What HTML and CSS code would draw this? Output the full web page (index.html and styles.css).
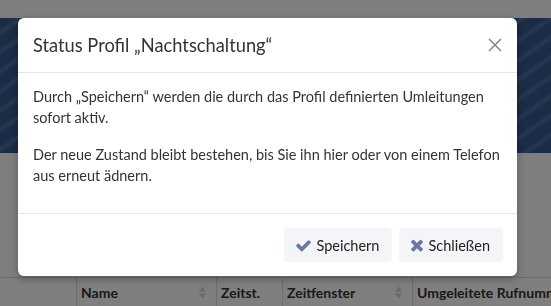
FILE: index.html
```html
<!DOCTYPE html>
<html lang="de">
<head>
    <meta charset="UTF-8">
    <meta name="viewport" content="width=device-width, initial-scale=1.0">
    <title>Status Profil</title>
    <link rel="stylesheet" href="styles.css">
</head>
<body>
    <div class="page">
        <div class="topbar"></div>
        <div class="banner"></div>
        <div class="content">
            <div class="grid-head">
                <div class="cell"></div>
                <div class="cell">Name
                    <svg class="sort" viewBox="0 0 8 16"><path d="M4 1 L8 7 H0 Z M4 15 L8 9 H0 Z"/></svg>
                </div>
                <div class="cell">Zeitst.</div>
                <div class="cell">Zeitfenster
                    <svg class="sort" viewBox="0 0 8 16"><path d="M4 1 L8 7 H0 Z M4 15 L8 9 H0 Z"/></svg>
                </div>
                <div class="cell">Umgeleitete Rufnummer</div>
            </div>
        </div>
    </div>

    <div class="backdrop"></div>

    <div class="modal">
        <div class="modal-header">
            <h4 class="modal-title">Status Profil „Nachtschaltung“</h4>
            <button type="button" class="close" aria-label="Schließen">
                <svg viewBox="0 0 14 14"><path d="M1 1 L13 13 M13 1 L1 13"/></svg>
            </button>
        </div>
        <div class="modal-body">
            <p>Durch „Speichern“ werden die durch das Profil definierten Umleitungen sofort aktiv.</p>
            <p>Der neue Zustand bleibt bestehen, bis Sie ihn hier oder von einem Telefon aus erneut ädnern.</p>
        </div>
        <div class="modal-footer">
            <button type="button" class="btn">
                <svg class="icon-check" viewBox="0 0 1792 1792"><path d="M1671 566q0 40-28 68l-724 724-136 136q-28 28-68 28t-68-28l-136-136-362-362q-28-28-28-68t28-68l136-136q28-28 68-28t68 28l294 295 656-657q28-28 68-28t68 28l136 136q28 28 28 68z"/></svg>
                Speichern
            </button>
            <button type="button" class="btn">
                <svg class="icon-times" viewBox="0 0 1408 1792"><path d="M1298 1322q0 40-28 68l-136 136q-28 28-68 28t-68-28l-294-294-294 294q-28 28-68 28t-68-28l-136-136q-28-28-28-68t28-68l294-294-294-294q-28-28-28-68t28-68l136-136q28-28 68-28t68 28l294 294 294-294q28-28 68-28t68 28l136 136q28 28 28 68t-28 68l-294 294 294 294q28 28 28 68z"/></svg>
                Schließen
            </button>
        </div>
    </div>
</body>
</html>
```
FILE: styles.css
```css
body {
    font-family: Lato, "Liberation Sans", sans-serif;
    font-size: 14.5px;
    color: #333;
    background-color: #fff;
    margin: 0;
    padding: 0;
    overflow: hidden;
}
.page {
    height: 306px;
}
.topbar {
    height: 18px;
    background-color: #fff;
}
.banner {
    height: 135px;
    background-color: #39588c;
    background-image: repeating-linear-gradient(145deg, rgba(150, 175, 215, 0) 0, rgba(150, 175, 215, 0) 8px, rgba(150, 175, 215, 0.28) 12px, rgba(150, 175, 215, 0) 16px);
}
.content {
    padding-top: 124px;
}
.grid-head {
    display: grid;
    grid-template-columns: 76px 140px 66px 130px 1fr;
    border-top: 1px solid #ddd;
    height: 36px;
}
.grid-head .cell {
    display: flex;
    align-items: center;
    padding: 0 4px 8px;
    border-left: 1px solid #ddd;
    font-weight: bold;
    font-size: 14px;
    color: #333;
    white-space: nowrap;
    overflow: hidden;
}
.grid-head .cell:first-child {
    border-left: none;
}
.sort {
    width: 7px;
    height: 15px;
    fill: #d4d4d4;
    margin-left: auto;
    margin-right: 6px;
}
.backdrop {
    position: fixed;
    inset: 0;
    background-color: rgba(0, 0, 0, 0.5);
}
.modal {
    position: absolute;
    left: 18px;
    top: 18px;
    width: 499px;
    background-color: #fff;
    border-radius: 6px;
    box-shadow: 0 3px 9px rgba(0, 0, 0, 0.3);
}
.modal-header {
    display: flex;
    align-items: center;
    padding: 15px;
    border-bottom: 1px solid #e5e5e5;
}
.modal-title {
    flex: 1;
    margin: 0;
    font-size: 18.3px;
    font-weight: normal;
    line-height: 24px;
    color: #333;
}
.close {
    width: 14px;
    height: 14px;
    padding: 0;
    border: none;
    background: none;
    cursor: pointer;
}
.close svg {
    display: block;
    width: 14px;
    height: 14px;
    stroke: #8a8a8a;
    stroke-width: 1.6;
}
.modal-body {
    padding: 13px 15px 11px;
}
.modal-body p {
    margin: 0 0 16px;
    line-height: 21px;
}
.modal-footer {
    display: flex;
    justify-content: flex-end;
    gap: 7px;
    padding: 14px;
    border-top: 1px solid #e5e5e5;
}
.btn {
    display: flex;
    align-items: center;
    gap: 4px;
    height: 34px;
    padding: 0 13px 0 11px;
    border: none;
    border-radius: 4px;
    background-color: #f3f5f9;
    font-family: inherit;
    font-size: 14.5px;
    color: #222;
    cursor: pointer;
}
.btn svg {
    fill: #6b77a3;
}
.icon-check {
    width: 17px;
    height: 17px;
}
.icon-times {
    width: 14px;
    height: 18px;
}
```
